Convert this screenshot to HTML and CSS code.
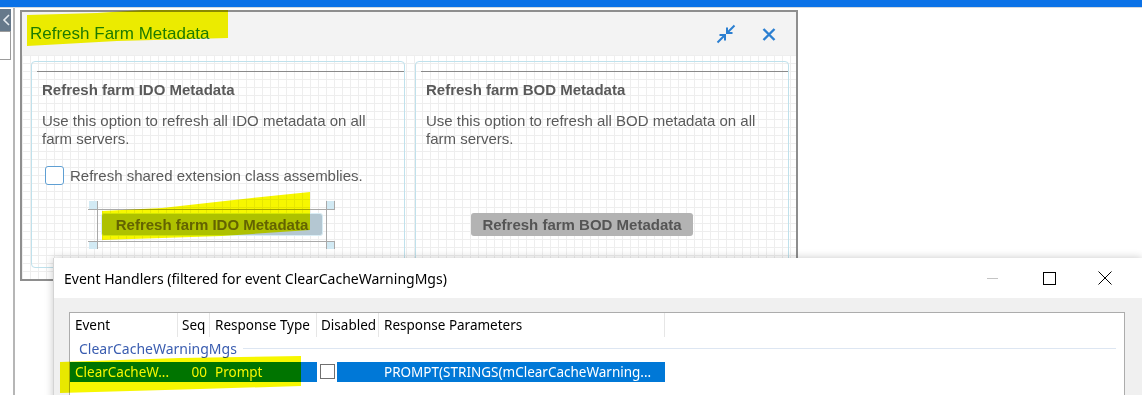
FILE: index.html
```html
<!DOCTYPE html>
<html lang="en">
<head>
    <meta charset="UTF-8">
    <meta name="viewport" content="width=device-width, initial-scale=1.0">
    <title>Refresh Farm Metadata</title>
    <link rel="stylesheet" href="styles.css">
</head>
<body>
    <div class="topbar"></div>
    <div class="workspace">
        <div class="sidebar">
            <div class="back-btn">
                <svg width="11" height="22" viewBox="0 0 11 22"><polyline points="9,6 4,11 9,16" fill="none" stroke="#e6ebf0" stroke-width="1.6"/></svg>
            </div>
            <div class="side-input"></div>
        </div>
        <div class="canvas">
            <div class="dialog">
                <div class="dialog-head">
                    <span class="dialog-title">Refresh Farm Metadata</span>
                    <div class="head-icons">
                        <!-- restore / collapse -->
                        <svg width="20" height="20" viewBox="0 0 20 20" fill="none" stroke="#2b7fd1" stroke-width="2"><path d="M18.5 1.5 11.8 8.2M11 3.5V9h5.5M1.5 18.5 8.2 11.8M3.5 11H9v5.5"/></svg>
                        <svg width="14" height="13" viewBox="0 0 14 13" fill="none" stroke="#2b7fd1" stroke-width="2.4"><path d="M1.5 1 12.5 12M12.5 1 1.5 12"/></svg>
                    </div>
                </div>
                <div class="dialog-body">
                    <div class="panel">
                        <div class="panel-rule"></div>
                        <h3 class="panel-title">Refresh farm IDO Metadata</h3>
                        <p class="panel-text">Use this option to refresh all IDO metadata on all farm servers.</p>
                        <label class="check"><span class="check-box"></span>Refresh shared extension class assemblies.</label>
                        <div class="btn-row">
                            <div class="sel-frame">
                                <span class="handle h-tl"></span>
                                <span class="handle h-tr"></span>
                                <span class="handle h-bl"></span>
                                <span class="handle h-br"></span>
                                <span class="vline vl-left"></span>
                                <span class="vline vl-right"></span>
                                <button class="btn btn-ido">Refresh farm IDO Metadata</button>
                            </div>
                        </div>
                    </div>
                    <div class="panel">
                        <div class="panel-rule"></div>
                        <h3 class="panel-title">Refresh farm BOD Metadata</h3>
                        <p class="panel-text">Use this option to refresh all BOD metadata on all farm servers.</p>
                        <div class="btn-row btn-row-bod">
                            <button class="btn btn-bod">Refresh farm BOD Metadata</button>
                        </div>
                    </div>
                </div>
            </div>
        </div>
    </div>

    <div class="eh-window">
        <div class="eh-titlebar">
            <span class="eh-title">Event Handlers (filtered for event ClearCacheWarningMgs)</span>
            <div class="eh-controls">
                <span class="ctl"><svg width="12" height="12" viewBox="0 0 12 12"><path d="M0 6.5H11" stroke="#c4c4c4" stroke-width="1"/></svg></span>
                <span class="ctl"><svg width="13" height="13" viewBox="0 0 13 13"><rect x="0.5" y="0.5" width="12" height="12" fill="none" stroke="#000" stroke-width="1"/></svg></span>
                <span class="ctl"><svg width="14" height="14" viewBox="0 0 14 14"><path d="M0.5 0.5 13.5 13.5M13.5 0.5 0.5 13.5" stroke="#000" stroke-width="1"/></svg></span>
            </div>
        </div>
        <div class="eh-body">
            <div class="list">
                <div class="list-head">
                    <div class="col c-event">Event</div>
                    <div class="col c-seq">Seq</div>
                    <div class="col c-type">Response Type</div>
                    <div class="col c-dis">Disabled</div>
                    <div class="col c-params">Response Parameters</div>
                </div>
                <div class="group-row">
                    <span class="group-name">ClearCacheWarningMgs</span>
                    <span class="group-line"></span>
                </div>
                <div class="data-row">
                    <div class="cell d-event sel">ClearCacheW...</div>
                    <div class="cell d-seq sel">00</div>
                    <div class="cell d-type sel">Prompt</div>
                    <div class="cell d-dis"><span class="cb"></span></div>
                    <div class="cell d-params sel">PROMPT(STRINGS(mClearCacheWarning...</div>
                </div>
            </div>
        </div>
    </div>

    <!-- highlighter marks drawn over the screenshot -->
    <div class="marker marker-title"></div>
    <div class="marker marker-btn"></div>
    <div class="marker marker-row"></div>
</body>
</html>
```

FILE: styles.css
```css
*{
    box-sizing: border-box;
}
html, body{
    margin: 0;
    height: 100%;
    overflow: hidden;
    background: #fff;
}
body{
    position: relative;
}
.topbar{
    height: 8px;
    background: #0b72e7;
    border-bottom: 1px solid #d3d9df;
}
.workspace{
    display: flex;
    height: 387px;
}
.sidebar{
    width: 15px;
    border-right: 2px solid #b6b6b6;
    padding-top: 1px;
}
.back-btn{
    width: 11px;
    height: 22px;
    background: #66798b;
}
.back-btn svg{
    display: block;
}
.side-input{
    width: 11px;
    height: 29px;
    background: #fff;
    border: 1px solid #9c9c9c;
    border-left: 0;
}
.canvas{
    flex: 1;
    padding: 2px 0 0 5px;
}

/* refresh dialog */
.dialog{
    width: 778px;
    height: 271px;
    border: 2px solid #8e8e8e;
    display: flex;
    flex-direction: column;
    font-family: "Liberation Sans", Arial, sans-serif;
}
.dialog-head{
    height: 43px;
    background: #f3f3f3;
    display: flex;
    align-items: center;
    justify-content: space-between;
    padding: 0 20px 0 8px;
}
.dialog-title{
    font-size: 17px;
    color: #1f7fcf;
    padding-top: 1px;
}
.head-icons{
    display: flex;
    align-items: center;
    gap: 26px;
    padding-top: 1px;
}
.head-icons svg{
    display: block;
}
.dialog-body{
    flex: 1;
    display: grid;
    grid-template-columns: 1fr 1fr;
    column-gap: 10px;
    padding: 6px 7px 11px 9px;
    background-color: #fff;
    background-image: linear-gradient(#eeeeee 1px, transparent 1px), linear-gradient(90deg, #eeeeee 1px, transparent 1px);
    background-size: 8px 8px;
}
.panel{
    border: 1px solid #bfe1ec;
    border-radius: 4px;
    display: flex;
    flex-direction: column;
    padding-bottom: 18px;
}
.panel-rule{
    height: 1px;
    background: #8a8a8a;
    margin: 9px 0 0 5px;
}
.panel-title{
    margin: 9px 0 0 10px;
    font-size: 15px;
    line-height: 18px;
    font-weight: bold;
    color: #595959;
}
.panel-text{
    margin: 13px 12px 0 10px;
    font-size: 15px;
    line-height: 18px;
    color: #5a5a5a;
}
.check{
    display: flex;
    align-items: center;
    gap: 6px;
    height: 19px;
    margin: 18px 0 0 13px;
    font-size: 15px;
    color: #5a5a5a;
}
.check-box{
    width: 19px;
    height: 19px;
    border: 1.5px solid #5f9fd3;
    border-radius: 3px;
    background: #fff;
}
.btn-row{
    margin-top: auto;
}
.btn-row-bod{
    padding: 12px 0 13px 55px;
}
.sel-frame{
    position: relative;
    width: 247px;
    margin-left: 56px;
    padding: 12px 12px 13px 13px;
}
.sel-frame::before, .sel-frame::after{
    content: "";
    position: absolute;
    left: 0;
    right: 0;
    border-top: 1px solid #a9a9a9;
}
.sel-frame::before{
    top: 8px;
}
.sel-frame::after{
    bottom: 7px;
}
.handle{
    position: absolute;
    width: 8px;
    height: 8px;
    background: #d2eaf4;
}
.h-tl{ left: 1px; top: 0; }
.h-tr{ right: 0; top: 0; border-right: 1px solid #a9a9a9; }
.h-bl{ left: 1px; bottom: 0; }
.h-br{ right: 0; bottom: 0; border-right: 1px solid #a9a9a9; }
.vline{
    position: absolute;
    top: 0;
    bottom: 0;
    width: 1px;
    background: #a9a9a9;
}
.vl-left{ left: 9px; }
.vl-right{ right: 8px; }
.btn{
    display: block;
    width: 222px;
    height: 23px;
    padding: 0;
    border-radius: 3px;
    font-family: "Liberation Sans", Arial, sans-serif;
    font-size: 15px;
    font-weight: bold;
    text-align: center;
}
.btn-ido{
    background: #b4c7d2;
    border: 1px solid #d9edf5;
    color: #666;
}
.btn-bod{
    background: #b3b3b3;
    border: 0;
    color: #555;
}

/* event handlers window */
.eh-window{
    position: absolute;
    left: 53px;
    top: 258px;
    width: 1089px;
    height: 150px;
    background: #f0f0f0;
    border-left: 1px solid #d4d4d4;
    box-shadow: 0 0 8px rgba(0,0,0,0.22);
    font-family: "Noto Sans", "Open Sans", sans-serif;
}
.eh-titlebar{
    height: 40px;
    background: #fff;
    display: flex;
    align-items: center;
    padding-left: 10px;
}
.eh-title{
    font-size: 14px;
    color: #000;
}
.eh-controls{
    margin-left: auto;
    display: flex;
    padding-right: 9px;
}
.ctl{
    width: 56px;
    display: flex;
    justify-content: center;
    align-items: center;
}
.ctl svg{
    display: block;
}
.eh-body{
    padding: 14px 17px 0 15px;
}
.list{
    height: 100px;
    background: #fff;
    border: 1px solid #acacac;
}
.list-head{
    display: flex;
    height: 24px;
}
.col{
    padding-left: 4px;
    font-size: 13.5px;
    line-height: 24px;
    white-space: nowrap;
    color: #000;
    border-right: 1px solid #e6e6e6;
}
.c-event{ width: 108px; padding-left: 5px; }
.c-seq{ width: 32px; }
.c-type{ width: 107px; padding-left: 5px; }
.c-dis{ width: 62px; }
.c-params{ width: 286px; padding-left: 5px; }
.group-row{
    display: flex;
    align-items: center;
    height: 21px;
    margin-top: 1px;
    padding: 0 8px 0 9px;
}
.group-name{
    font-size: 14px;
    color: #3a5db0;
}
.group-line{
    flex: 1;
    height: 1px;
    margin-left: 6px;
    background: #dde6f2;
}
.data-row{
    display: flex;
    height: 20px;
    margin-top: 3px;
}
.cell{
    font-size: 13.5px;
    line-height: 20px;
    white-space: nowrap;
    overflow: hidden;
}
.sel{
    background: #0078d7;
    color: #fff;
}
.d-event{ width: 108px; padding-left: 5px; }
.d-seq{ width: 32px; padding-right: 3px; text-align: right; }
.d-type{ width: 107px; padding-left: 5px; }
.d-dis{ width: 20px; }
.d-params{ width: 328px; padding-left: 47px; }
.cb{
    display: block;
    width: 15px;
    height: 15px;
    margin: 2px 0 0 3px;
    border: 1px solid #707070;
    background: #fff;
}

/* yellow highlighter */
.marker{
    position: absolute;
    background: #f7f700;
    mix-blend-mode: multiply;
    pointer-events: none;
}
.marker-title{
    left: 27px;
    top: 10px;
    width: 201px;
    height: 36px;
    clip-path: polygon(0 5px, 70px 3px, 116px 0, 100% 0, 100% 28px, 90px 31px, 0 100%);
}
.marker-btn{
    left: 102px;
    top: 192px;
    width: 208px;
    height: 48px;
    clip-path: polygon(0 19px, 60px 16px, 150px 6px, 100% 0, 100% 38px, 120px 44px, 0 100%);
}
.marker-row{
    left: 60px;
    top: 356px;
    width: 241px;
    height: 37px;
    clip-path: polygon(0 6px, 120px 2px, 100% 0, 100% 30px, 140px 33px, 0 100%);
}
```
